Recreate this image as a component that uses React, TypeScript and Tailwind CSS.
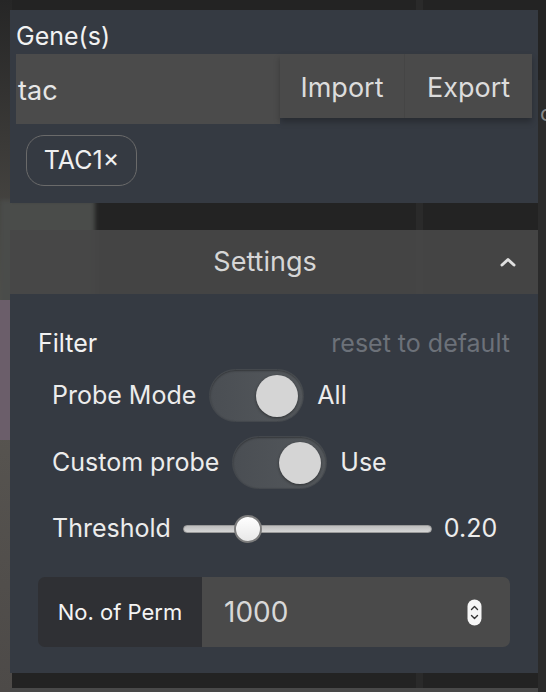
import React from 'react';

const font = { fontFamily: 'Inter, "Noto Sans", sans-serif' };

const Toggle: React.FC<{ on?: boolean }> = ({ on = true }) => (
  <div className="relative flex h-[53px] w-[95px] items-center rounded-full border border-[#44484d] bg-gradient-to-r from-[#4a4e53] to-[#54585c] px-[5px] shadow-[inset_0_1px_2px_rgba(0,0,0,0.35)]">
    <div className={`h-[42px] w-[42px] rounded-full bg-[#d5d5d5] shadow-[0_1px_3px_rgba(0,0,0,0.45)] ${on ? 'ml-auto' : ''}`} />
  </div>
);

const Spinner = () => (
  <svg width="15" height="27" viewBox="0 0 15 27">
    <rect x="0.5" y="0.5" width="14" height="26" rx="7" fill="#f6f6f6" />
    <path d="M4.5 10.5 L7.5 7.5 L10.5 10.5" stroke="#333" strokeWidth="1.4" fill="none" strokeLinecap="round" strokeLinejoin="round" />
    <path d="M4.5 16.5 L7.5 19.5 L10.5 16.5" stroke="#333" strokeWidth="1.4" fill="none" strokeLinecap="round" strokeLinejoin="round" />
  </svg>
);

export default function App() {
  return (
    <div className="relative h-[692px] w-[546px] overflow-hidden bg-[#232323]" style={font}>
      {/* backdrop under the panels */}
      <div className="absolute inset-y-0 left-0 w-[12px] bg-gradient-to-b from-[#262626] via-[#5a5752] to-[#4d4a48]" />
      <div className="absolute left-0 top-[200px] h-[110px] w-[95px] bg-[#4a4c4a] blur-[2px]" />
      <div className="absolute left-0 top-[300px] h-[140px] w-[12px] bg-[#6b5e6a]" />
      <div className="absolute inset-y-0 left-[416px] w-[7px] bg-[#2a2a2a]" />
      <div className="absolute right-0 top-[80px] h-[612px] w-[8px] bg-[#2b2b2b] text-[22px] leading-none text-[#888]">
        <span className="ml-[2px] mt-[22px] block">c</span>
      </div>

      <div className="relative flex flex-col pl-[10px] pr-[8px] pt-[10px]">
        {/* genes panel */}
        <section className="h-[193px] bg-[#353a42] px-[6px]">
          <div className="pt-[12px] text-[25px] leading-[28px] text-[#f2f2f2]">Gene(s)</div>
          <div className="mt-[4px] flex items-start">
            <div className="flex h-[70px] w-[264px] items-center bg-[#4b4b4b] pl-[2px] pt-[4px] text-[27px] text-[#e6e6e6]">
              tac
            </div>
            <div className="flex h-[64px] flex-1 bg-[#4a4a4a] shadow-[0_4px_6px_rgba(0,0,0,0.25)]">
              <button className="flex w-[125px] items-center justify-center border-r border-[#454545] pt-[4px] text-[27px] text-[#dcdcdc]">
                Import
              </button>
              <button className="flex flex-1 items-center justify-center pt-[4px] text-[27px] text-[#dcdcdc]">
                Export
              </button>
            </div>
          </div>
          <div className="ml-[10px] mt-[11px] flex h-[51px] w-[111px] items-center justify-center rounded-[18px] border border-[#6a6a6a] text-[25px] text-[#f0f0f0]">
            TAC1×
          </div>
        </section>

        {/* settings panel */}
        <section className="mt-[27px]">
          <div className="flex h-[64px] items-center bg-[#474747]/95 pr-[22px]">
            <span className="flex-1 pl-[20px] text-center text-[27px] text-[#d6d6d6]">Settings</span>
            <svg width="16" height="10" viewBox="0 0 16 10">
              <path d="M2 8 L8 2.5 L14 8" stroke="#e0e0e0" strokeWidth="3" fill="none" strokeLinecap="round" strokeLinejoin="round" />
            </svg>
          </div>
          <div className="h-[379px] bg-[#353a42] px-[28px] pt-[36px]">
            <div className="flex h-[28px] items-center justify-between text-[25px]">
              <span className="text-[#f2f2f2]">Filter</span>
              <span className="text-[#6c7179]">reset to default</span>
            </div>
            <div className="mt-[11px] flex items-center gap-[13px] pl-[14px] text-[25px] text-[#ececec]">
              <span>Probe Mode</span>
              <Toggle />
              <span>All</span>
            </div>
            <div className="mt-[14px] flex items-center gap-[13px] pl-[14px] text-[25px] text-[#ececec]">
              <span>Custom probe</span>
              <Toggle />
              <span>Use</span>
            </div>
            <div className="mt-[26px] flex h-[28px] items-center gap-[12px] pl-[14px] text-[25px] text-[#ececec]">
              <span>Threshold</span>
              <div className="relative h-[8px] w-[249px] rounded-full border border-[#9a9a9a] bg-gradient-to-b from-[#bdbdbd] to-[#d6d6d6]">
                <div className="absolute left-[50px] top-1/2 h-[28px] w-[28px] -translate-y-1/2 rounded-full border-2 border-[#7c7c7c] bg-gradient-to-b from-[#ffffff] to-[#e8e8e8]" />
              </div>
              <span>0.20</span>
            </div>
            <div className="mt-[34px] flex h-[70px] overflow-hidden rounded-[7px]">
              <div className="flex w-[164px] items-center justify-center bg-[#2f3034] text-[22px] text-[#f4f4f4]">
                No. of Perm
              </div>
              <div className="flex flex-1 items-center bg-[#4a4a4a] pl-[22px] pr-[28px]">
                <span className="flex-1 text-[28px] text-[#d8d8d8]">1000</span>
                <Spinner />
              </div>
            </div>
          </div>
        </section>

        <section className="mt-[15px] h-[40px] bg-[#494949]" />
      </div>
    </div>
  );
}
